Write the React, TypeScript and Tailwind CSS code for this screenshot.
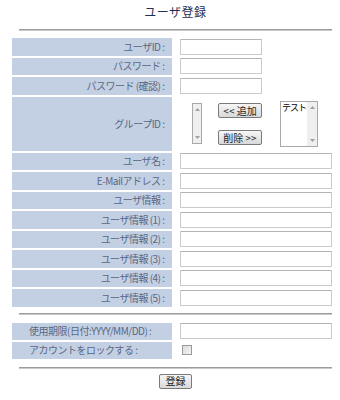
import React from "react";

const font = { fontFamily: '"Noto Sans CJK JP", "Liberation Sans", sans-serif' };

const labelCls =
  "bg-[#c3d0e4] text-[#5b6781] text-[10px] leading-[12px] tracking-[-0.5px] font-normal flex items-center justify-end pr-[7px] whitespace-nowrap";

function Hr() {
  return <div className="ml-[19px] w-[313px] h-[2px] border-t border-t-[#9c9c9c] border-b border-b-[#c9c9c9]" />;
}

function Input({ w }: { w: string }) {
  return (
    <div
      className={`${w} h-[16px] bg-white border border-[#cacaca] border-t-[#b4b4b4] rounded-[1px]`}
    />
  );
}

function UpArrow() {
  return (
    <svg width="5" height="3" viewBox="0 0 5 3" className="block">
      <path d="M0 3 L2.5 0 L5 3 Z" fill="#a0a0a0" />
    </svg>
  );
}
function DownArrow() {
  return (
    <svg width="5" height="3" viewBox="0 0 5 3" className="block">
      <path d="M0 0 L2.5 3 L5 0 Z" fill="#a0a0a0" />
    </svg>
  );
}

function Scrollbar({ cls }: { cls: string }) {
  return (
    <div className={`${cls} shrink-0 flex flex-col items-center justify-between py-[4px] bg-[#efefef]`}>
      <UpArrow />
      <DownArrow />
    </div>
  );
}

function Btn({ children, w, h }: { children: React.ReactNode; w: string; h: string }) {
  return (
    <div
      className={`${w} ${h} flex items-center justify-center border border-[#7a7a7a] rounded-[2px] bg-gradient-to-b from-[#f6f6f6] to-[#d9d9d9] text-[10px] leading-[10px] text-[#222] whitespace-nowrap`}
    >
      {children}
    </div>
  );
}

export default function App() {
  const shortRows = ["ユーザID :", "パスワード :", "パスワード (確認) :"];
  const longRows = [
    "ユーザ名 :",
    "E-Mailアドレス :",
    "ユーザ情報 :",
    "ユーザ情報 (1) :",
    "ユーザ情報 (2) :",
    "ユーザ情報 (3) :",
    "ユーザ情報 (4) :",
    "ユーザ情報 (5) :",
  ];

  return (
    <div className="w-[340px] h-[400px] bg-white" style={font}>
      <div className="pt-[5px] ml-[19px] w-[313px] h-[19px] text-center text-[12px] leading-[14px] font-normal text-[#1f2f55] tracking-[0.5px]">
        ユーザ登録
      </div>
      <div className="mt-[10px]">
        <Hr />
      </div>

      <div className="mt-[7px] ml-[12px] w-[320px] grid grid-cols-[159.5px_158.5px] gap-x-[2px] gap-y-[2px]">
        {shortRows.map((l) => (
          <React.Fragment key={l}>
            <div className={`${labelCls} h-[17.5px]`}>{l}</div>
            <div className="h-[17.5px] flex items-center pl-[6.5px]">
              <Input w="w-[82px]" />
            </div>
          </React.Fragment>
        ))}

        <div className={`${labelCls} h-[54px]`}>グループID :</div>
        <div className="h-[54px] flex items-center pl-[18.5px]">
          <div className="w-[10px] h-[41px] border border-[#a9a9a9] flex">
            <Scrollbar cls="w-full h-full" />
          </div>
          <div className="ml-[16px] flex flex-col gap-[12px] mt-[1px]">
            <Btn w="w-[44px]" h="h-[15px]">&lt;&lt; 追加</Btn>
            <Btn w="w-[44px]" h="h-[15px]">削除 &gt;&gt;</Btn>
          </div>
          <div className="ml-[18px] w-[38px] h-[46px] border border-[#a9a9a9] bg-white flex">
            <div className="flex-1 min-w-0 overflow-hidden whitespace-nowrap text-[9px] leading-[11px] text-black pl-[1px] tracking-[-1px]">
              テスト
            </div>
            <Scrollbar cls="w-[10px] h-full" />
          </div>
        </div>

        {longRows.map((l) => (
          <React.Fragment key={l}>
            <div className={`${labelCls} h-[17.5px]`}>{l}</div>
            <div className="h-[17.5px] flex items-center pl-[6.5px]">
              <Input w="w-[152px]" />
            </div>
          </React.Fragment>
        ))}
      </div>

      <div className="mt-[6px]">
        <Hr />
      </div>

      <div className="mt-[8px] ml-[12px] w-[320px] grid grid-cols-[159.5px_158.5px] gap-x-[2px] gap-y-[2px]">
        <div className={`${labelCls} !justify-start pl-[17px] h-[17px]`}>使用期限(日付:YYYY/MM/DD) :</div>
        <div className="h-[17px] flex items-center pl-[6.5px]">
          <Input w="w-[152px]" />
        </div>
        <div className={`${labelCls} !justify-start pl-[17px] h-[17px]`}>アカウントをロックする :</div>
        <div className="h-[17px] flex items-center pl-[8.5px]">
          <div className="w-[10px] h-[10px] border border-[#9a9a9a] bg-gradient-to-br from-[#dcdcdc] to-[#f4f4f4]" />
        </div>
      </div>

      <div className="mt-[8px]">
        <Hr />
      </div>

      <div className="mt-[5px] flex justify-center pl-[19px] pr-[8px]">
        <Btn w="w-[33px]" h="h-[15px]">登録</Btn>
      </div>
    </div>
  );
}
